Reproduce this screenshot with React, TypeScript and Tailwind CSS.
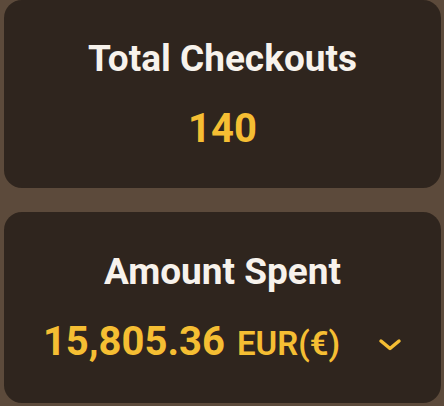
import React from "react";

export default function App() {
  return (
    <div
      className="w-[444px] h-[406px] bg-[#5c4a3b] pl-[4px] pr-[3px] flex flex-col gap-[24px]"
      style={{ fontFamily: "Roboto, 'Liberation Sans', sans-serif" }}
    >
      <div className="h-[188px] rounded-[18px] bg-[#2f251e] flex flex-col items-center pt-[39px] gap-[28px]">
        <div className="text-[37px] leading-[40px] font-bold text-[#f7f2ec]">Total Checkouts</div>
        <div className="text-[40px] leading-[44px] font-bold text-[#f5be33]">140</div>
      </div>
      <div className="h-[191px] rounded-[18px] bg-[#2f251e] flex flex-col items-center pt-[40px] gap-[28px]">
        <div className="text-[37px] leading-[40px] font-bold text-[#f7f2ec]">Amount Spent</div>
        <div className="flex items-baseline text-[#f5be33]">
          <span className="text-[40px] leading-[44px] font-bold">15,805.36</span>
          <span className="ml-[12px] text-[33px] leading-[44px] font-semibold">EUR(€)</span>
          <svg
            className="ml-[38px] self-center mt-[4px]"
            width="24"
            height="14"
            viewBox="0 0 24 14"
            fill="none"
            stroke="#f5be33"
            strokeWidth="3.5"
            strokeLinecap="round"
            strokeLinejoin="round"
          >
            <polyline points="3,3 12,10.5 21,3" />
          </svg>
        </div>
      </div>
    </div>
  );
}
